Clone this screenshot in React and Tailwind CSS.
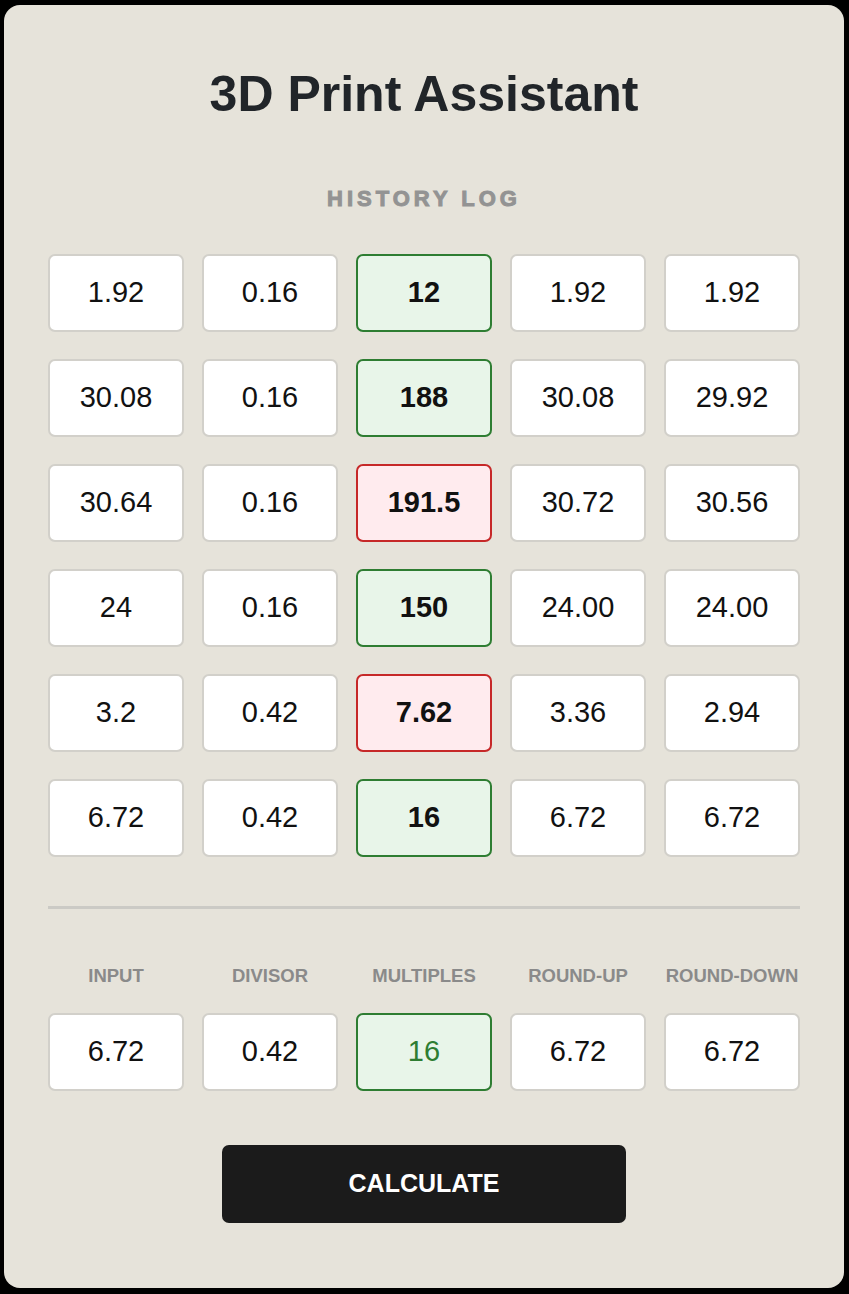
import React from "react";

const history = [
  { input: "1.92", divisor: "0.16", multiples: "12", up: "1.92", down: "1.92", exact: true },
  { input: "30.08", divisor: "0.16", multiples: "188", up: "30.08", down: "29.92", exact: true },
  { input: "30.64", divisor: "0.16", multiples: "191.5", up: "30.72", down: "30.56", exact: false },
  { input: "24", divisor: "0.16", multiples: "150", up: "24.00", down: "24.00", exact: true },
  { input: "3.2", divisor: "0.42", multiples: "7.62", up: "3.36", down: "2.94", exact: false },
  { input: "6.72", divisor: "0.42", multiples: "16", up: "6.72", down: "6.72", exact: true },
];

const labels = ["INPUT", "DIVISOR", "MULTIPLES", "ROUND-UP", "ROUND-DOWN"];

const Cell = ({ children, variant = "plain", bold = false }) => {
  const look =
    variant === "good"
      ? "bg-[#e8f5e9] border-[#2e7d32]"
      : variant === "bad"
      ? "bg-[#ffebee] border-[#c62828]"
      : "bg-white border-[#d2d0ca]";
  return (
    <div
      className={`h-[78px] flex items-center justify-center rounded-[7px] border-2 text-[29px] text-[#111] ${look} ${
        bold ? "font-bold" : ""
      }`}
    >
      {children}
    </div>
  );
};

export default function App() {
  const last = history[history.length - 1];

  return (
    <div
      className="bg-black pt-[5px] pl-[4px] pb-[6px] min-h-[1294px]"
      style={{ fontFamily: '"Liberation Sans", Arial, sans-serif' }}
    >
      <div className="w-[840px] bg-[#e6e3da] rounded-[16px] px-[44px] pt-[59px] pb-[65px]">
        {/* Title */}
        <h1 className="text-center text-[50px] leading-[60px] font-bold text-[#212529]">
          3D Print Assistant
        </h1>

        {/* History */}
        <h2 className="mt-[60px] text-center text-[22px] leading-[30px] font-bold tracking-[4px] text-[#939393] [-webkit-text-stroke:1px_#939393]">
          HISTORY LOG
        </h2>
        <div className="mt-[40px] grid grid-cols-5 gap-x-[18px] gap-y-[27px]">
          {history.map((row, i) => (
            <React.Fragment key={i}>
              <Cell>{row.input}</Cell>
              <Cell>{row.divisor}</Cell>
              <Cell variant={row.exact ? "good" : "bad"} bold>
                {row.multiples}
              </Cell>
              <Cell>{row.up}</Cell>
              <Cell>{row.down}</Cell>
            </React.Fragment>
          ))}
        </div>

        <div className="mt-[49px] h-[3px] bg-[#cbcac5]" />

        {/* Current calculation */}
        <div className="mt-[57px] grid grid-cols-5 gap-x-[18px]">
          {labels.map((label) => (
            <div
              key={label}
              className="text-center whitespace-nowrap text-[18.5px] leading-[20px] font-bold text-[#8a8a8a]"
            >
              {label}
            </div>
          ))}
        </div>
        <div className="mt-[27px] grid grid-cols-5 gap-x-[18px]">
          <Cell>{last.input}</Cell>
          <Cell>{last.divisor}</Cell>
          <div className="h-[78px] flex items-center justify-center rounded-[7px] border-2 bg-[#e8f5e9] border-[#2e7d32] text-[29px] text-[#2e7d32]">
            {last.multiples}
          </div>
          <Cell>{last.up}</Cell>
          <Cell>{last.down}</Cell>
        </div>

        <div className="mt-[54px] flex justify-center">
          <button className="w-[404px] h-[78px] rounded-[7px] bg-[#1b1b1b] text-white text-[25px] font-bold">
            CALCULATE
          </button>
        </div>
      </div>
    </div>
  );
}
